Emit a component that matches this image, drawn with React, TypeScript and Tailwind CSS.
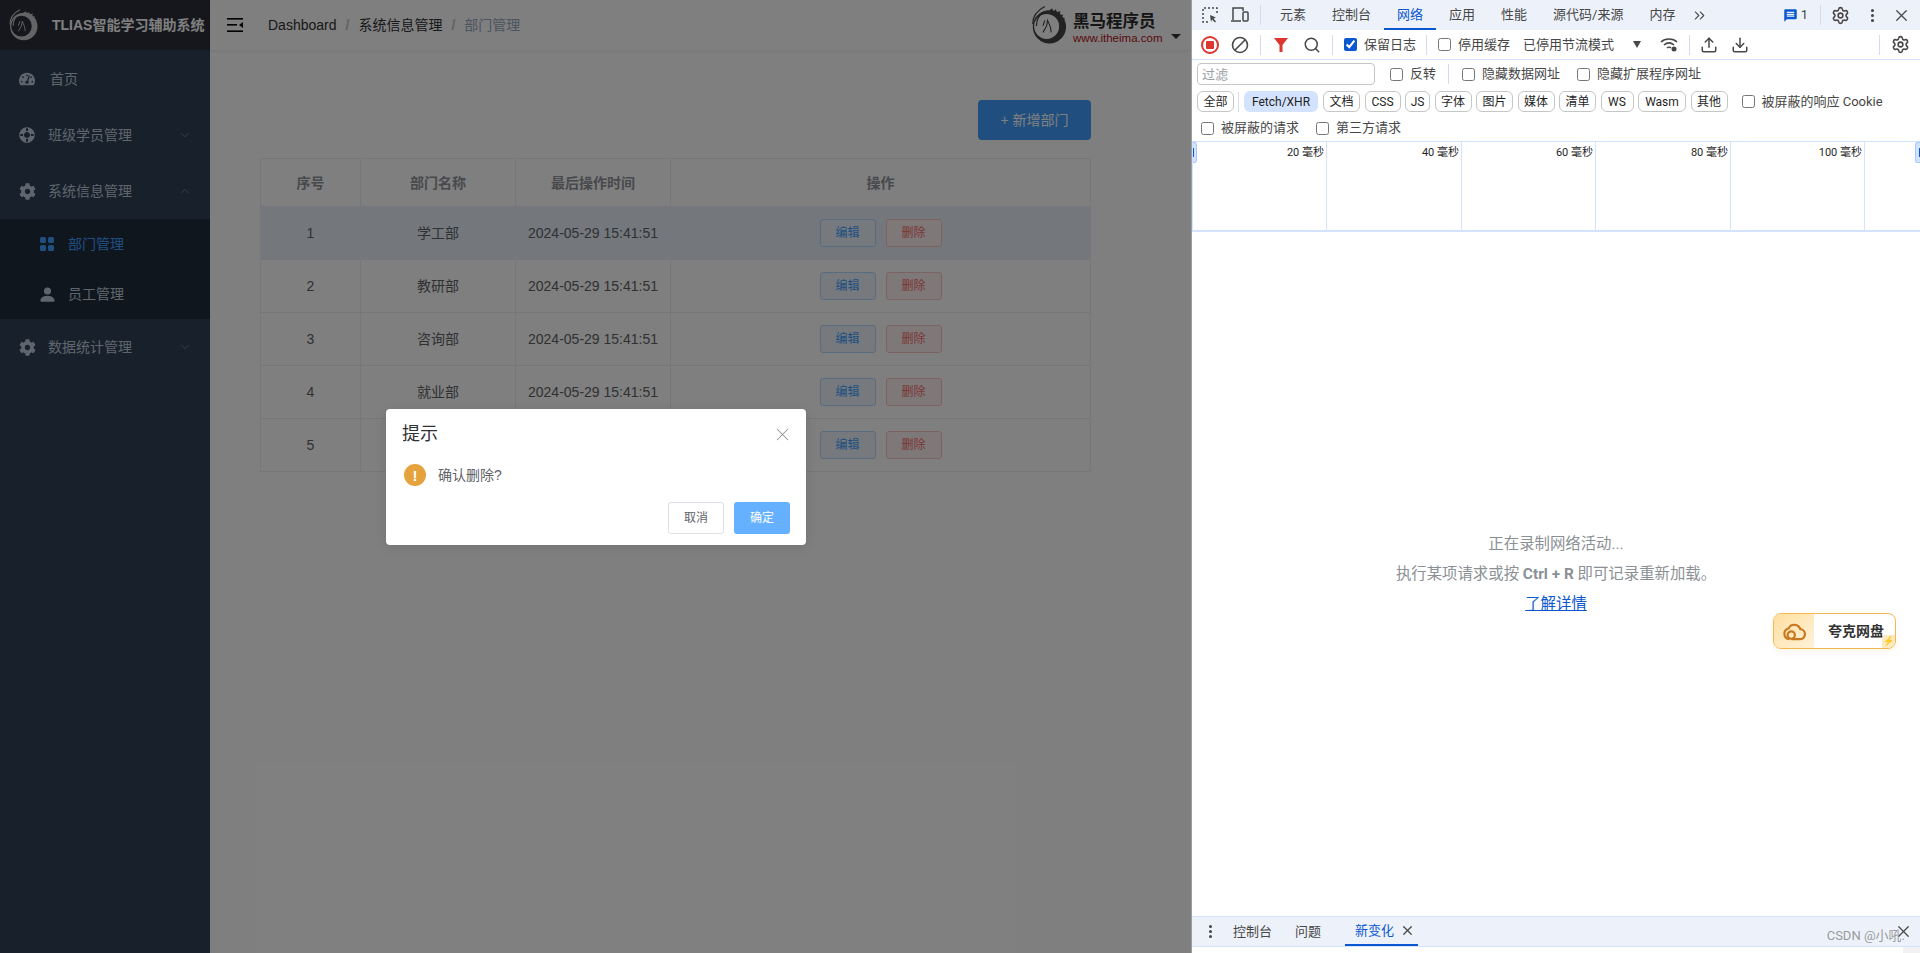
import { ChevronDown, ChevronUp, ChevronsRight, Download, EllipsisVertical, Search, Settings, Upload, X } from "lucide-react";
import { BsGridFill, BsPersonFill } from "react-icons/bs";
import { FaCog, FaLifeRing, FaTachometerAlt } from "react-icons/fa";
import { MdMessage } from "react-icons/md";

const departments = [
  { id: 1, name: "学工部" },
  { id: 2, name: "教研部" },
  { id: 3, name: "咨询部" },
  { id: 4, name: "就业部" },
  { id: 5, name: "人事部" },
];

const chips = [
  { label: "文档", w: "w-[37px]" },
  { label: "CSS", w: "w-[36px]" },
  { label: "JS", w: "w-[25px]" },
  { label: "字体", w: "w-[37px]" },
  { label: "图片", w: "w-[37px]" },
  { label: "媒体", w: "w-[37px]" },
  { label: "清单", w: "w-[37px]" },
  { label: "WS", w: "w-[33px]" },
  { label: "Wasm", w: "w-[48px]" },
  { label: "其他", w: "w-[37px]" },
];

function Logo({ color, className }: { color: string; className: string }) {
  return (
    <svg viewBox="0 0 40 42" className={className}>
      <path
        fill={color}
        fillRule="evenodd"
        d="M21 5a18 18 0 1 1 0 36a18 18 0 0 1 0-36zM18 9a13 13 0 1 0 0 27a13 13 0 0 0 0-27z"
      />
      <path fill={color} d="M21 5l3-2 1 3 3-2 1 3 4-1-1 4 4 0-2 3 4 1-3 3 3 2-4 1-6-9z" />
      <path fill="none" stroke={color} strokeWidth="1.4" d="M3 20C3 12 8 5 16 1M7 22C7 15 10 10 15 7" />
      <path fill="none" stroke={color} strokeWidth="1.2" d="M14 29l4-7 1-6 3 7 1 6M16 16l-2 6" />
    </svg>
  );
}

function MenuItem({ icon, label, open, hasArrow = true, textClass }: { icon: React.ReactNode; label: string; open?: boolean; hasArrow?: boolean; textClass?: string }) {
  return (
    <div className="flex h-[56px] items-center text-sm text-[#bfcbd9]">
      <span className="flex w-[48px] shrink-0 items-center pl-[19px]">{icon}</span>
      <span className={`w-[130px] ${textClass ?? ""}`}>{label}</span>
      {hasArrow && (open ? <ChevronUp size={14} strokeWidth={1.2} className="text-[#909399]" /> : <ChevronDown size={14} strokeWidth={1.2} className="text-[#909399]" />)}
    </div>
  );
}

function Sidebar() {
  return (
    <aside className="flex h-full w-[210px] shrink-0 flex-col bg-[#304156]">
      <div className="flex h-[50px] items-center bg-[#2b2f3a] pl-[7px]">
        <Logo color="#c8c8c8" className="h-[32px] w-[32px]" />
        <span className="ml-[13px] whitespace-nowrap text-sm font-bold text-white">TLIAS智能学习辅助系统</span>
      </div>
      <div className="pt-px">
        <MenuItem icon={<FaTachometerAlt size={16} className="text-[#bfcbd9]" />} label="首页" hasArrow={false} textClass="pl-[2px]" />
        <MenuItem icon={<FaLifeRing size={16} className="rotate-45" />} label="班级学员管理" />
        <MenuItem icon={<FaCog size={17} />} label="系统信息管理" open />
        <div className="bg-[#1f2d3d]">
          <div className="flex h-[50px] items-center pl-[39px] text-sm text-[#409eff]">
            <BsGridFill size={16} />
            <span className="ml-[13px]">部门管理</span>
          </div>
          <div className="flex h-[50px] items-center pl-[38px] text-sm text-[#bfcbd9]">
            <BsPersonFill size={19} />
            <span className="ml-[11px]">员工管理</span>
          </div>
        </div>
        <MenuItem icon={<FaCog size={17} />} label="数据统计管理" />
      </div>
    </aside>
  );
}

function TopBar() {
  return (
    <header className="flex h-[50px] items-center bg-white shadow-[0_1px_4px_rgba(0,21,41,0.08)]">
      <svg viewBox="0 0 16 14" className="ml-[17px] h-[14px] w-[16px]" fill="#000">
        <rect width="16" height="1.6" />
        <rect y="6" width="10" height="1.6" />
        <rect y="12.4" width="16" height="1.6" />
        <path d="M16 4v6l-4-3z" />
      </svg>
      <nav className="ml-[25px] flex items-center text-sm">
        <span className="text-[#303133]">Dashboard</span>
        <span className="mx-[9px] font-bold text-[#c0c4cc]">/</span>
        <span className="text-[#303133]">系统信息管理</span>
        <span className="mx-[9px] font-bold text-[#c0c4cc]">/</span>
        <span className="text-[#97a8be]">部门管理</span>
      </nav>
      <div className="ml-auto flex items-center">
        <Logo color="#444" className="h-[40px] w-[37px]" />
        <div className="ml-[6px] mt-[7px] flex w-[82px] flex-col">
          <span className="whitespace-nowrap text-[16.5px] font-bold leading-[19px] text-[#2a2a2a]">黑马程序员</span>
          <span className="whitespace-nowrap text-[11.5px] leading-[15px] text-[#b5121b]">www.itheima.com</span>
        </div>
        <span className="ml-[16px] mt-[22px] h-0 w-0 border-x-[5px] border-t-[5px] border-x-transparent border-t-[#303133]" />
        <span className="w-[10px]" />
      </div>
    </header>
  );
}

function DeptTable() {
  return (
    <table className="w-[831px] table-fixed border-separate border-spacing-0 border-l border-t border-[#ebeef5] text-sm">
      <colgroup>
        <col className="w-[100px]" />
        <col className="w-[155px]" />
        <col className="w-[155px]" />
        <col className="w-[420px]" />
      </colgroup>
      <thead>
        <tr className="h-[48px] text-[#909399]">
          {["序号", "部门名称", "最后操作时间", "操作"].map((h) => (
            <th key={h} className="border-b border-r border-[#ebeef5] font-bold">{h}</th>
          ))}
        </tr>
      </thead>
      <tbody className="text-[#606266]">
        {departments.map((d) => (
          <tr key={d.id} className={d.id === 1 ? "h-[53px] bg-[#e8f1fb]" : "h-[53px]"}>
            <td className="border-b border-r border-[#ebeef5] text-center">{d.id}</td>
            <td className="border-b border-r border-[#ebeef5] text-center">{d.name}</td>
            <td className="border-b border-r border-[#ebeef5] text-center">2024-05-29 15:41:51</td>
            <td className="border-b border-r border-[#ebeef5]">
              <div className="flex justify-center gap-[10px]">
                <button className="h-[28px] w-[56px] rounded-[3px] border border-[#b3d8ff] bg-[#ecf5ff] text-xs text-[#409eff]">编辑</button>
                <button className="h-[28px] w-[56px] rounded-[3px] border border-[#fbc4c4] bg-[#fef0f0] text-xs text-[#f56c6c]">删除</button>
              </div>
            </td>
          </tr>
        ))}
      </tbody>
    </table>
  );
}

function ConfirmBox() {
  return (
    <div className="absolute left-[386px] top-[409px] h-[136px] w-[420px] rounded bg-white pl-[16px] pr-[16px] pt-[15px] shadow-[0_2px_12px_rgba(0,0,0,0.1)]">
      <div className="flex h-[20px] items-center justify-between">
        <span className="text-[18px] leading-none text-[#303133]">提示</span>
        <X size={21} strokeWidth={1.2} className="-mr-[3px] text-[#909399]" />
      </div>
      <div className="mt-[19px] flex h-[24px] items-center">
        <span className="ml-[2px] flex h-[22px] w-[22px] items-center justify-center rounded-full bg-[#e6a23c] text-[15px] font-bold leading-none text-white">!</span>
        <span className="ml-[12px] text-sm text-[#606266]">确认删除?</span>
      </div>
      <div className="mt-[15px] flex justify-end gap-[10px]">
        <button className="h-[32px] w-[56px] rounded-[3px] border border-[#dcdfe6] bg-white text-xs text-[#606266]">取消</button>
        <button className="h-[32px] w-[56px] rounded-[3px] bg-[#66b1ff] text-xs text-white">确定</button>
      </div>
    </div>
  );
}

function Sep({ className }: { className: string }) {
  return <span className={`h-[20px] w-px shrink-0 bg-[#d3dcec] ${className}`} />;
}

function Slot({ className, children }: { className: string; children: React.ReactNode }) {
  return <span className={`flex shrink-0 items-center justify-center ${className}`}>{children}</span>;
}

function Check({ label, checked, boxClass, textClass }: { label: string; checked?: boolean; boxClass: string; textClass?: string }) {
  return (
    <>
      <input type="checkbox" checked={!!checked} readOnly className={`m-0 h-[13px] w-[13px] shrink-0 accent-[#0b57d0] ${boxClass}`} />
      <span className={`ml-[7px] shrink-0 whitespace-nowrap ${textClass ?? "text-[#474747]"}`}>{label}</span>
    </>
  );
}

function DevToolsTabs() {
  const tabs = ["元素", "控制台", "网络", "应用", "性能", "源代码/来源", "内存"];
  return (
    <div className="flex h-[30px] items-center bg-[#edf2fa] pl-[3px] text-[13px] text-[#474747]">
      <Slot className="w-[30px]">
        <svg viewBox="0 0 18 18" className="h-[18px] w-[18px]" fill="none" stroke="#474747" strokeWidth="1.5">
          <path strokeDasharray="2 2" d="M7 16H2V2h14v5" />
          <path d="M9 9l6 2.5-2.5 1 2.5 3-1 1-3-3-1 2.500z" fill="#474747" stroke="none" />
        </svg>
      </Slot>
      <Slot className="w-[30px]">
        <svg viewBox="0 0 20 18" className="h-[18px] w-[20px]" fill="none" stroke="#474747" strokeWidth="1.5">
          <path d="M3 14V2h10v3M1 15h10" />
          <rect x="13" y="6" width="5" height="9" rx="1" />
        </svg>
      </Slot>
      <Sep className="ml-[5px]" />
      <div className="ml-[6px] flex h-full">
        {tabs.map((t) => (
          <span
            key={t}
            className={
              t === "网络"
                ? "flex items-center border-b-2 border-[#0b57d0] px-[13px] pt-[2px] text-[#0b57d0]"
                : "flex items-center border-b-2 border-transparent px-[13px] pt-[2px]"
            }
          >
            {t}
          </span>
        ))}
      </div>
      <Slot className="w-[22px]"><ChevronsRight size={17} strokeWidth={1.5} /></Slot>
      <Slot className="ml-[72px] w-[16px]"><MdMessage size={15} className="text-[#0b57d0]" /></Slot>
      <span className="w-[12px] text-center">1</span>
      <Sep className="ml-[10px]" />
      <Slot className="w-[38px]"><Settings size={19} /></Slot>
      <Slot className="w-[26px]"><EllipsisVertical size={17} strokeWidth={2.4} /></Slot>
      <Slot className="w-[32px]"><X size={19} strokeWidth={1.6} /></Slot>
    </div>
  );
}

function NetworkToolbar() {
  return (
    <div className="flex h-[30px] items-center border-b border-[#d3e3fd] pl-[3px] text-[13px]">
      <Slot className="w-[30px]">
        <span className="flex h-[18px] w-[18px] items-center justify-center rounded-full border-2 border-[#dc362e]">
          <span className="h-[8px] w-[8px] rounded-[1px] bg-[#dc362e]" />
        </span>
      </Slot>
      <Slot className="w-[30px]">
        <svg viewBox="0 0 18 18" className="h-[18px] w-[18px]" fill="none" stroke="#474747" strokeWidth="1.6">
          <circle cx="9" cy="9" r="7.5" />
          <path d="M4 14L14 4" />
        </svg>
      </Slot>
      <Sep className="ml-[5px]" />
      <Slot className="w-[40px]">
        <svg viewBox="0 0 16 16" className="h-[16px] w-[16px]" fill="#dc362e"><path d="M1 1h14L9.500 8v7h-3V8z" /></svg>
      </Slot>
      <Slot className="w-[22px]"><Search size={18} className="text-[#474747]" /></Slot>
      <Sep className="ml-[9px]" />
      <Check label="保留日志" checked boxClass="ml-[11px]" />
      <Sep className="ml-[10px]" />
      <Check label="停用缓存" boxClass="ml-[11px]" />
      <span className="ml-[13px] w-[91px] shrink-0 whitespace-nowrap text-[#474747]">已停用节流模式</span>
      <span className="ml-[19px] h-0 w-0 shrink-0 border-x-[4px] border-t-[7px] border-x-transparent border-t-[#474747]" />
      <Slot className="relative ml-[18px] w-[20px]">
        <svg viewBox="0 0 20 16" className="h-[16px] w-[20px]" fill="none" stroke="#474747" strokeWidth="1.6">
          <path d="M2 5c4-4 12-4 16 0M5 8c3-2.500 7-2.500 10 0M8 11c1-1 3-1 4 0" />
          <circle cx="15" cy="12" r="2.500" fill="#474747" stroke="none" />
        </svg>
      </Slot>
      <Sep className="ml-[10px]" />
      <Slot className="ml-[9px] w-[20px]"><Upload size={18} className="text-[#474747]" /></Slot>
      <Slot className="ml-[11px] w-[20px]"><Download size={18} className="text-[#474747]" /></Slot>
      <Sep className="ml-[129px]" />
      <Slot className="ml-[4px] w-[32px]"><Settings size={19} className="text-[#474747]" /></Slot>
    </div>
  );
}

function FilterRows() {
  return (
    <div className="border-b border-[#d3e3fd] text-[13px]">
      <div className="flex h-[28px] items-center pl-[5px]">
        <input
          placeholder="过滤"
          readOnly
          className="h-[22px] w-[178px] shrink-0 rounded-[4px] border border-[#c4c7c5] px-[4px] text-[13px] outline-none placeholder:text-[#9aa0a6]"
        />
        <Check label="反转" boxClass="ml-[15px]" />
        <Sep className="ml-[12px]" />
        <Check label="隐藏数据网址" boxClass="ml-[13px]" />
        <Check label="隐藏扩展程序网址" boxClass="ml-[17px]" />
      </div>
      <div className="flex h-[27px] items-center pl-[5px] text-xs">
        <span className="flex h-[21px] w-[37px] shrink-0 items-center justify-center rounded-[6px] border border-[#c4c7c5] text-[#1f1f1f]">全部</span>
        <Sep className="ml-[4px]" />
        <span className="ml-[5px] flex h-[21px] w-[74px] shrink-0 items-center justify-center rounded-[6px] bg-[#d3e3fd] text-[#1f1f1f]">Fetch/XHR</span>
        <div className="ml-[5px] flex shrink-0 gap-[4.5px]">
          {chips.map((c) => (
            <span key={c.label} className={`flex h-[21px] items-center justify-center rounded-[6px] border border-[#c4c7c5] text-[#1f1f1f] ${c.w}`}>
              {c.label}
            </span>
          ))}
        </div>
        <Check label="被屏蔽的响应 Cookie" boxClass="ml-[14px]" textClass="text-[13px] text-[#474747]" />
      </div>
      <div className="flex h-[26px] items-center pl-[9px]">
        <Check label="被屏蔽的请求" boxClass="" />
        <Check label="第三方请求" boxClass="ml-[17px]" />
      </div>
    </div>
  );
}

function Timeline() {
  const cols = [
    { label: "20 毫秒", w: "w-[134px]" },
    { label: "40 毫秒", w: "w-[135px]" },
    { label: "60 毫秒", w: "w-[134px]" },
    { label: "80 毫秒", w: "w-[135px]" },
    { label: "100 毫秒", w: "w-[134px]" },
  ];
  return (
    <div className="relative flex h-[90px] border-b-2 border-l border-[#d3e3fd] text-[11px] text-[#1f1f1f]">
      {cols.map((c) => (
        <div key={c.label} className={`h-full shrink-0 border-r border-[#d3e3fd] pr-[2px] pt-[3px] text-right ${c.w}`}>
          {c.label}
        </div>
      ))}
      <span className="absolute left-0 top-0 flex h-[21px] w-[4px] items-center rounded-r-[3px] border border-l-0 border-[#a8c7fa] bg-[#d3e3fd]">
        <span className="h-[9px] w-px bg-[#0b57d0]" />
      </span>
      <span className="absolute right-0 top-0 flex h-[21px] w-[5px] items-center justify-end rounded-l-[3px] border border-r-0 border-[#a8c7fa] bg-[#d3e3fd]">
        <span className="h-[9px] w-px bg-[#0b57d0]" />
      </span>
    </div>
  );
}

function QuarkBadge() {
  return (
    <div className="absolute left-[581px] top-[613px] flex h-[36px] w-[123px] overflow-hidden rounded-[8px] border border-[#f3b84f] bg-white shadow-[0_3px_6px_rgba(240,180,80,0.12)]">
      <div className="flex w-[40px] items-center justify-center bg-gradient-to-br from-[#ffdf9f] to-[#fff2d9]">
        <svg viewBox="0 0 26 22" className="h-[20px] w-[24px]" fill="none" stroke="#c8781e" strokeWidth="2.4">
          <path d="M8 20a6 6 0 0 1-1-11.800A7 7 0 0 1 20 9a5.500 5.500 0 0 1-1 11H10" />
          <circle cx="10" cy="15.500" r="4" />
        </svg>
      </div>
      <span className="flex flex-1 items-center pl-[14px] text-sm font-bold text-[#333]">夸克网盘</span>
      <span className="absolute bottom-0 right-0 flex h-[13px] w-[13px] items-center justify-center rounded-tl-[3px] bg-[#ffe9bf] text-[9px] leading-none text-[#d98a1c]">⚡</span>
    </div>
  );
}

function Drawer() {
  return (
    <div className="flex h-[31px] shrink-0 items-center border-y border-[#d3e3fd] bg-[#edf2fa] pl-[3px] text-[13px] text-[#474747]">
      <Slot className="w-[30px]"><EllipsisVertical size={17} strokeWidth={2.4} /></Slot>
      <span className="ml-[8px] shrink-0">控制台</span>
      <span className="ml-[23px] shrink-0">问题</span>
      <div className="ml-[24px] flex h-full items-center border-b-2 border-[#0b57d0] pl-[10px] pr-[3px] text-[#0b57d0]">
        <span>新变化</span>
        <X size={15} className="ml-[6px] text-[#474747]" />
      </div>
      <X size={19} strokeWidth={1.6} className="ml-[476px] shrink-0" />
    </div>
  );
}

function DevTools() {
  return (
    <div className="relative flex h-full w-[729px] shrink-0 flex-col border-l border-[#9aa0aa] bg-white font-['Roboto','Noto_Sans_CJK_SC',sans-serif]">
      <DevToolsTabs />
      <NetworkToolbar />
      <FilterRows />
      <Timeline />
      <div className="flex flex-1 flex-col items-center justify-center gap-[12px] text-[15.4px] text-[#8b9095]">
        <span className="leading-[18px]">正在录制网络活动...</span>
        <span className="leading-[18px]">执行某项请求或按 <b>Ctrl + R</b> 即可记录重新加载。</span>
        <span className="leading-[18px] text-[#0b57d0] underline">了解详情</span>
      </div>
      <QuarkBadge />
      <Drawer />
      <div className="flex h-[6px] shrink-0 justify-end">
        <span className="h-full w-[17px] bg-[#f1f1f1]" />
      </div>
      <span className="absolute bottom-[8px] right-[15px] text-[13px] text-[#8f8f8f]/90">CSDN @小吼.</span>
    </div>
  );
}

export default function App() {
  return (
    <div className="flex h-[953px] w-[1920px] overflow-hidden font-['Liberation_Sans','Noto_Sans_CJK_SC',sans-serif]">
      <div className="relative flex h-full w-[1191px] shrink-0 bg-white">
        <Sidebar />
        <div className="flex-1">
          <TopBar />
          <main className="pl-[50px] pr-[100px] pt-[50px]">
            <div className="mb-[18px] flex justify-end">
              <button className="h-[40px] w-[113px] rounded bg-[#409eff] text-sm text-white">+ 新增部门</button>
            </div>
            <DeptTable />
          </main>
        </div>
        <div className="absolute inset-0 bg-black/50" />
        <ConfirmBox />
      </div>
      <DevTools />
    </div>
  );
}
